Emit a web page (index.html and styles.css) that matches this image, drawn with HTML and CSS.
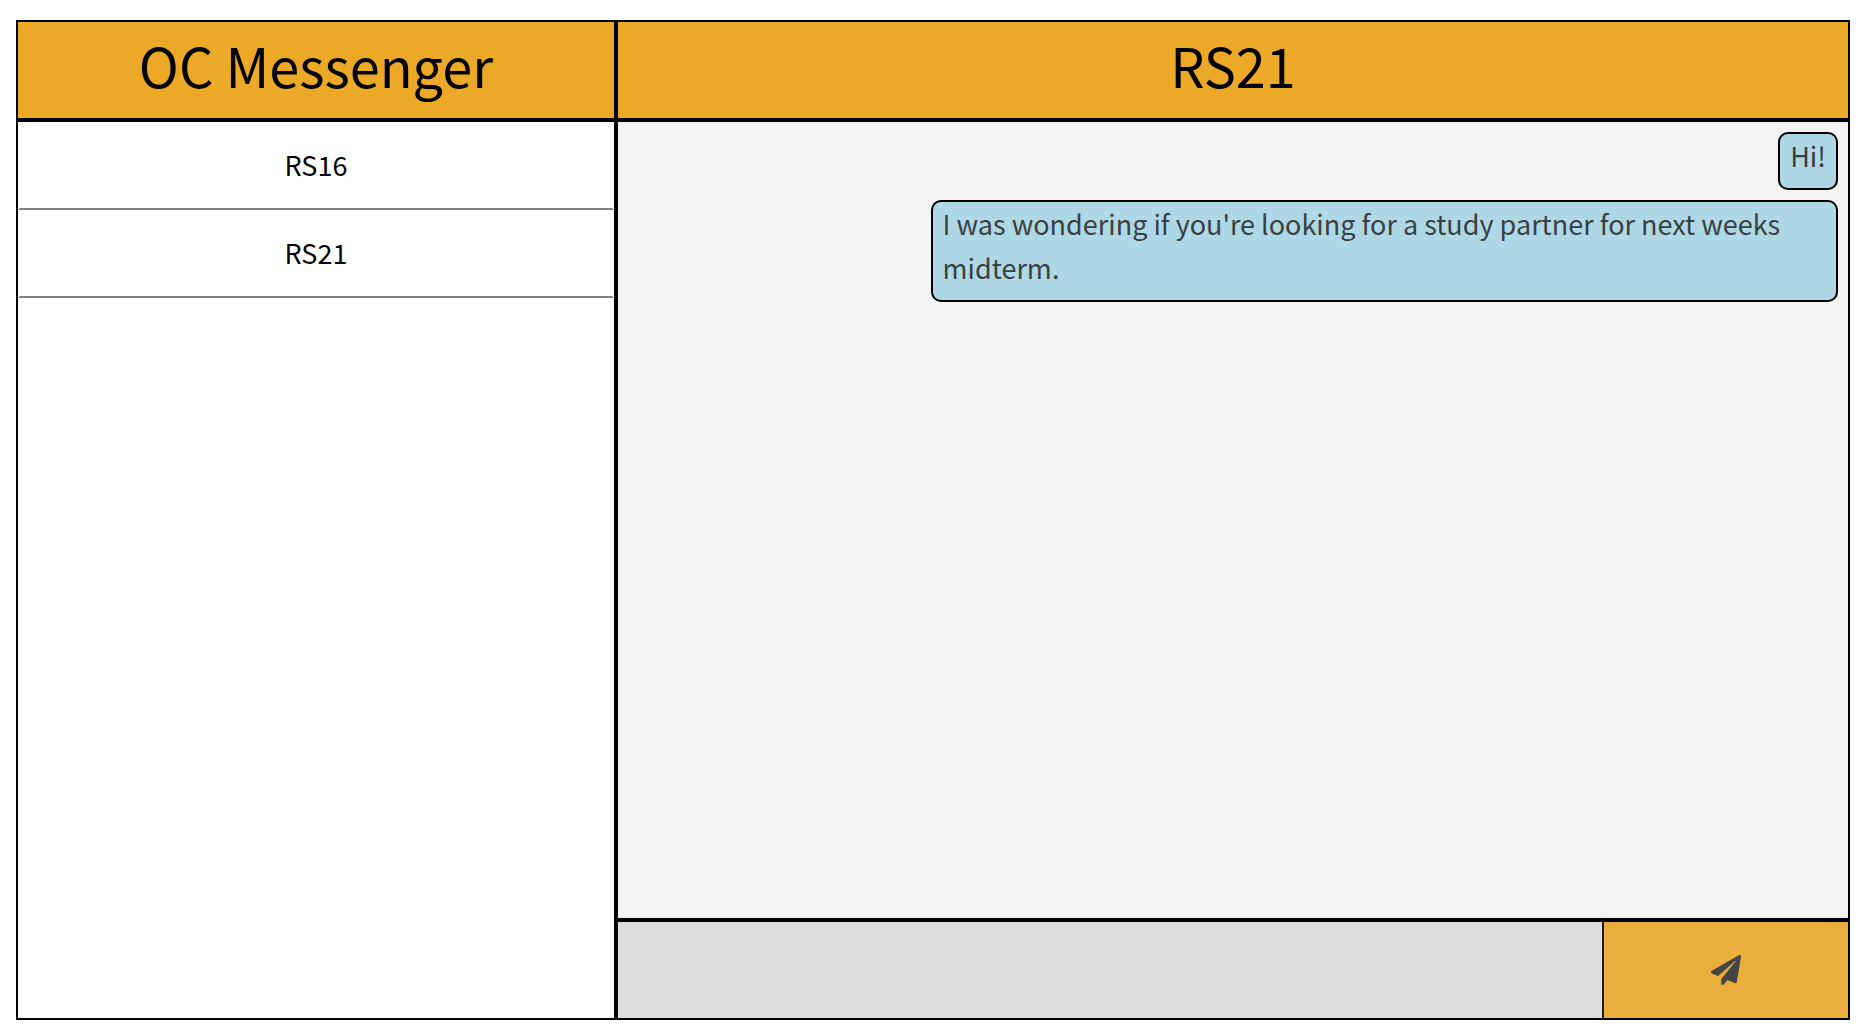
FILE: index.html
```html
<!DOCTYPE html>
<html lang="en">
<head>
  <meta charset="utf-8">
  <meta name="viewport" content="width=device-width, initial-scale=1">
  <title>OC Messenger</title>
  <link rel="stylesheet" href="styles.css">
</head>
<body>
  <div class="messenger">
    <aside class="sidebar">
      <h1 class="title">OC Messenger</h1>
      <nav class="contacts" aria-label="Conversations">
        <button class="contact" type="button">RS16</button>
        <button class="contact" type="button">RS21</button>
      </nav>
    </aside>
    <main class="chat">
      <h2 class="title">RS21</h2>
      <div class="messages">
        <p class="bubble">Hi!</p>
        <p class="bubble">I was wondering if you're looking for a study partner for next weeks midterm.</p>
      </div>
      <form class="composer">
        <input class="composer-input" type="text" aria-label="Message">
        <button class="send" type="button" aria-label="Send">
          <svg class="send-icon" viewBox="0 0 512 512" aria-hidden="true"><path fill="currentColor" d="M476 3.2L12.5 270.6c-18.1 10.4-15.8 35.6 2.2 43.2L121 358.4l287.3-253.2c5.5-4.9 13.3 2.6 8.6 8.3L176 407v80.5c0 23.6 28.5 32.9 42.5 15.8L282 426l124.6 52.2c14.2 6 30.4-2.9 33-18.2l72-432C515 7.8 493.3-6.8 476 3.2z"/></svg>
        </button>
      </form>
    </main>
  </div>
</body>
</html>
```

FILE: styles.css
```css
* {
  box-sizing: border-box;
}

body {
  margin: 0;
  padding: 20px 14px 14px 16px;
  min-height: 100vh;
  display: flex;
  background: #fff;
  color: #000;
  font-family: "Noto Sans CJK SC", "Noto Sans", sans-serif;
  font-size: 27px;
  line-height: 44px;
}

button,
input {
  margin: 0;
  border: 0;
  border-radius: 0;
  font: inherit;
  color: inherit;
}

.messenger {
  flex: 1;
  display: grid;
  grid-template-columns: minmax(0, 20fr) minmax(0, 41fr);
  border: 2px solid #000;
}

.sidebar,
.chat {
  display: flex;
  flex-direction: column;
}

.sidebar {
  border-right: 4px solid #000;
}

.title {
  margin: 0;
  padding: 3px 0 13px;
  border-bottom: 4px solid #000;
  background: #eca928;
  font-size: 54px;
  font-weight: 400;
  line-height: 80px;
  text-align: center;
}

.contacts {
  display: flex;
  flex-direction: column;
}

.contact {
  padding: 21px 0;
  border: 2px solid #fff;
  border-top: 0;
  border-bottom-color: #808080;
  background: #fff;
}

.messages {
  flex: 1;
  display: flex;
  flex-direction: column;
  align-items: flex-end;
  gap: 10px;
  padding: 10px;
  background: #f3f3f3;
}

.bubble {
  max-width: 75%;
  margin: 0;
  padding: 0 10px 10px;
  border: 2px solid #000;
  border-radius: 10px;
  background: #aed8e5;
  color: #3a3f41;
}

.composer {
  display: grid;
  grid-template-columns: 4fr 1fr;
  border-top: 4px solid #000;
}

.composer-input {
  min-width: 0;
  padding: 26px 10px;
  background: #ddd;
}

.send {
  display: flex;
  align-items: center;
  justify-content: center;
  border-left: 2px solid #1a1a1a;
  background: #e9ae3c;
  color: #444;
}

.send-icon {
  width: 30px;
  height: 30px;
}
```
